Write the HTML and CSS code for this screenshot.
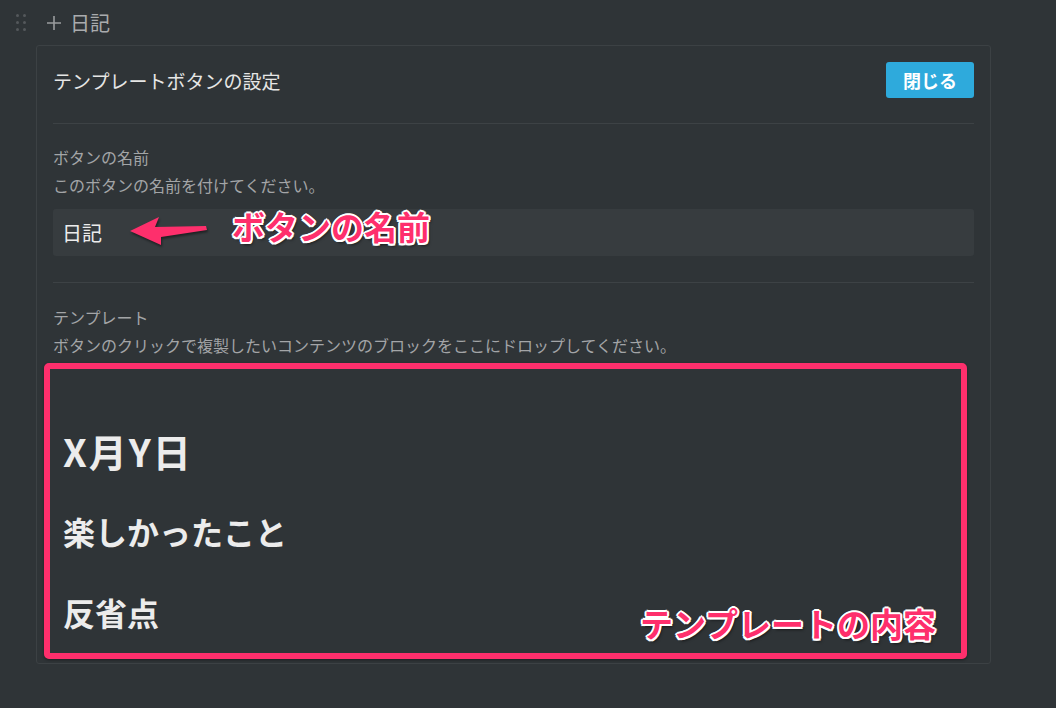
FILE: index.html
```html
<!DOCTYPE html>
<html lang="ja">
<head>
    <meta charset="UTF-8">
    <meta name="viewport" content="width=device-width, initial-scale=1.0">
    <title>テンプレートボタンの設定</title>
    <link rel="stylesheet" href="styles.css">
</head>
<body>
    <div class="block-row">
        <span class="handle">
            <i></i><i></i><i></i><i></i><i></i><i></i>
        </span>
        <svg class="plus" width="16" height="16" viewBox="0 0 16 16">
            <path d="M8 1v14M1 8h14" stroke="#9a9c9e" stroke-width="1.6" fill="none"/>
        </svg>
        <span class="block-title">日記</span>
    </div>

    <div class="panel">
        <div class="panel-header">
            <span class="panel-title">テンプレートボタンの設定</span>
            <button class="close-button">閉じる</button>
        </div>

        <div class="section">
            <div class="label">ボタンの名前</div>
            <div class="label">このボタンの名前を付けてください。</div>
            <div class="name-field">
                <span class="name-value">日記</span>
                <svg class="arrow" width="80" height="36" viewBox="0 0 80 36">
                    <path d="M0 18 L29 4 L25 14 L76 13 L77 17 L31 24 L31 32 Z" fill="#fe2f6c"/>
                </svg>
                <span class="note note-name">ボタンの名前</span>
            </div>
        </div>

        <div class="section section-template">
            <div class="label">テンプレート</div>
            <div class="label">ボタンのクリックで複製したいコンテンツのブロックをここにドロップしてください。</div>
            <div class="template-box">
                <div class="t-heading t-large">X月Y日</div>
                <div class="t-heading">楽しかったこと</div>
                <div class="t-heading">反省点</div>
                <span class="note note-content">テンプレートの内容</span>
            </div>
        </div>
    </div>
</body>
</html>
```

FILE: styles.css
```css
body {
    margin: 0;
    background-color: #2f3437;
    font-family: "Noto Sans CJK JP", "Noto Sans", sans-serif;
    color: #e6e6e5;
    overflow: hidden;
}
.block-row {
    display: flex;
    align-items: center;
    height: 45px;
    padding-left: 16px;
}
.handle {
    display: grid;
    grid-template-columns: 3px 3px;
    column-gap: 4px;
    row-gap: 4px;
    margin-right: 20px;
}
.handle i {
    width: 3px;
    height: 3px;
    border-radius: 50%;
    background: #54585b;
}
.plus {
    margin-right: 8px;
}
.block-title {
    font-size: 20px;
    color: #a9abad;
    line-height: 1;
}
.panel {
    margin-left: 36px;
    width: 921px;
    border: 1px solid #3c4144;
    border-radius: 3px;
    padding: 0 16px 4px;
}
.panel-header {
    display: flex;
    justify-content: space-between;
    align-items: center;
    padding: 16px 0 25px;
    border-bottom: 1px solid #3d4245;
}
.panel-title {
    font-size: 19px;
}
.close-button {
    width: 88px;
    height: 36px;
    border: none;
    border-radius: 3px;
    background: #2eaadc;
    color: #ffffff;
    font-family: inherit;
    font-size: 18px;
    font-weight: 700;
}
.section {
    padding-top: 19px;
    padding-bottom: 26px;
    border-bottom: 1px solid #3d4245;
}
.label {
    font-size: 16px;
    line-height: 28px;
    color: #a3a5a7;
}
.name-field {
    position: relative;
    margin-top: 10px;
    height: 47px;
    background: #373c3f;
    border-radius: 3px;
    display: flex;
    align-items: center;
    padding-left: 9px;
}
.name-value {
    font-size: 20px;
    color: #ececec;
}
.arrow {
    position: absolute;
    left: 77px;
    top: 4px;
    filter: drop-shadow(1px 2px 1px rgba(0, 0, 0, 0.45));
}
.note {
    position: absolute;
    font-size: 33px;
    font-weight: 700;
    line-height: 40px;
    color: #fe2f6c;
    white-space: nowrap;
    text-shadow:
        2px 0 0 #fff, -2px 0 0 #fff, 0 2px 0 #fff, 0 -2px 0 #fff,
        1.5px 1.5px 0 #fff, -1.5px 1.5px 0 #fff, 1.5px -1.5px 0 #fff, -1.5px -1.5px 0 #fff,
        2px 3px 3px rgba(0, 0, 0, 0.55);
}
.note-name {
    left: 179px;
    top: -3px;
}
.section-template {
    padding-top: 20px;
    padding-bottom: 0;
    border-bottom: none;
}
.template-box {
    position: relative;
    margin: 4px 7px 0 -9px;
    border: 6px solid #fe2f6c;
    border-radius: 5px;
    padding: 41px 13px 0;
    height: 243px;
    box-shadow: 0 1px 3px rgba(0, 0, 0, 0.4);
}
.t-heading {
    font-size: 32px;
    font-weight: 700;
    line-height: 81px;
    color: #ececec;
}
.t-large {
    font-size: 38px;
    letter-spacing: 2px;
}
.note-content {
    left: 590px;
    top: 234px;
}
```
